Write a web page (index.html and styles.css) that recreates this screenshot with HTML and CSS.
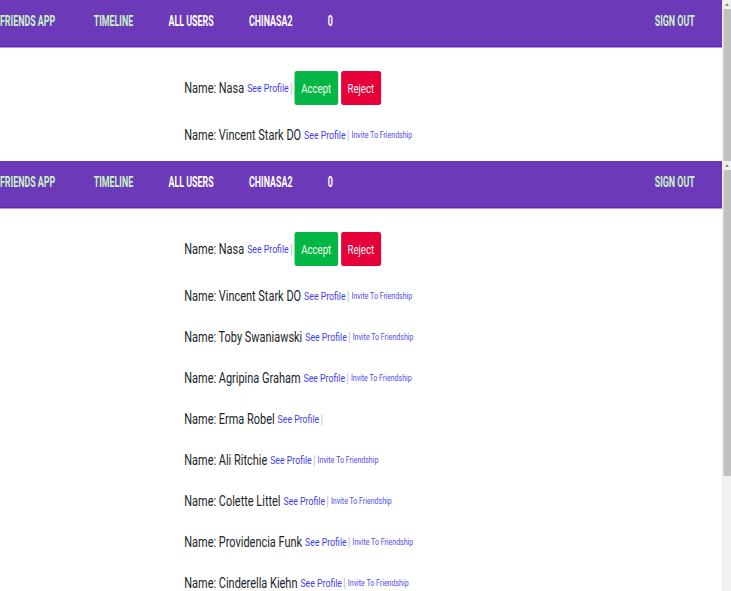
FILE: index.html
```html
<!DOCTYPE html>
<html>
<head>
<meta charset="utf-8">
<link rel="stylesheet" href="styles.css">
</head>
<body>
<div class="pane pane-top">
  <div class="pane-main">
    <nav class="nav">
      <div class="nav-inner">
        <a class="brand green">FRIENDS APP</a>
        <ul class="nav-list">
          <li><a class="green">TIMELINE</a></li>
          <li><a>ALL USERS</a></li>
          <li><a>CHINASA2</a></li>
          <li><a>0</a></li>
        </ul>
        <a class="signout green">SIGN OUT</a>
      </div>
    </nav>
    <div class="users">
      <div class="row"><span class="name">Name: Nasa</span><a class="see">See Profile</a><span class="sep">|</span><button class="btn accept">Accept</button><button class="btn reject">Reject</button></div>
      <div class="row"><span class="name">Name: Vincent Stark DO</span><a class="see">See Profile</a><span class="sep">|</span><a class="invite">Invite To Friendship</a></div>
    </div>
  </div>
  <div class="scrollbar">
    <div class="sb-arrow"></div>
    <div class="sb-thumb sb-thumb-full"></div>
  </div>
</div>
<div class="pane pane-bottom">
  <div class="pane-main">
    <nav class="nav">
      <div class="nav-inner">
        <a class="brand green">FRIENDS APP</a>
        <ul class="nav-list">
          <li><a class="green">TIMELINE</a></li>
          <li><a>ALL USERS</a></li>
          <li><a>CHINASA2</a></li>
          <li><a>0</a></li>
        </ul>
        <a class="signout green">SIGN OUT</a>
      </div>
    </nav>
    <div class="users">
      <div class="row"><span class="name">Name: Nasa</span><a class="see">See Profile</a><span class="sep">|</span><button class="btn accept">Accept</button><button class="btn reject">Reject</button></div>
      <div class="row"><span class="name">Name: Vincent Stark DO</span><a class="see">See Profile</a><span class="sep">|</span><a class="invite">Invite To Friendship</a></div>
      <div class="row"><span class="name">Name: Toby Swaniawski</span><a class="see">See Profile</a><span class="sep">|</span><a class="invite">Invite To Friendship</a></div>
      <div class="row"><span class="name">Name: Agripina Graham</span><a class="see">See Profile</a><span class="sep">|</span><a class="invite">Invite To Friendship</a></div>
      <div class="row"><span class="name">Name: Erma Robel</span><a class="see">See Profile</a><span class="sep">|</span></div>
      <div class="row"><span class="name">Name: Ali Ritchie</span><a class="see">See Profile</a><span class="sep">|</span><a class="invite">Invite To Friendship</a></div>
      <div class="row"><span class="name">Name: Colette Littel</span><a class="see">See Profile</a><span class="sep">|</span><a class="invite">Invite To Friendship</a></div>
      <div class="row"><span class="name">Name: Providencia Funk</span><a class="see">See Profile</a><span class="sep">|</span><a class="invite">Invite To Friendship</a></div>
      <div class="row"><span class="name">Name: Cinderella Kiehn</span><a class="see">See Profile</a><span class="sep">|</span><a class="invite">Invite To Friendship</a></div>
    </div>
  </div>
  <div class="scrollbar">
    <div class="sb-arrow"></div>
    <div class="sb-thumb sb-thumb-part"></div>
    <div class="sb-track"></div>
  </div>
</div>
</body>
</html>
```
FILE: styles.css
```css
html, body {
  margin: 0;
  padding: 0;
  background: #ffffff;
  overflow: hidden;
  height: 591px;
  font-family: Roboto, "Noto Sans", sans-serif;
}

.pane {
  display: flex;
  overflow: hidden;
}

.pane-top {
  height: 161px;
}

.pane-bottom {
  height: 430px;
}

.pane-main {
  flex: 1;
  overflow: hidden;
  min-width: 0;
}

/* NAV */
.nav {
  height: 46px;
  background: #6c3ab8;
  border-bottom: 1px solid #5b28a8;
  box-shadow: 0 1px 0 #b49ae6;
  overflow: hidden;
}

.nav-inner {
  width: calc(100% / 0.592);
  height: 100%;
  transform: scaleX(0.592);
  transform-origin: 0 0;
  display: flex;
  align-items: center;
  padding-bottom: 5px;
  box-sizing: border-box;
  font-size: 15px;
  font-weight: 700;
  color: #ffffff;
}

.nav a {
  color: #ffffff;
  text-decoration: none;
  white-space: nowrap;
}

.nav a.green {
  color: #c9f3c6;
}

.brand {
  padding-left: 0;
}

.nav-list {
  list-style: none;
  display: flex;
  margin: 0 0 0 35px;
  padding: 0;
}

.nav-list li a {
  display: block;
  padding: 0 29.8px;
}

.signout {
  margin-left: auto;
  padding-right: 46px;
}

/* USERS LIST */
.users {
  width: calc(100% / 0.74);
  transform: scaleX(0.74);
  transform-origin: 0 0;
  padding: 24px 0 0 249px;
  box-sizing: border-box;
}

.row {
  display: flex;
  align-items: center;
  min-height: 23px;
  margin-bottom: 18px;
  white-space: nowrap;
  color: #222428;
}

.name {
  font-size: 14.8px;
  color: #222428;
}

.see {
  font-size: 11.8px;
  color: #4040f0;
  margin-left: 4px;
}

.sep {
  font-size: 12px;
  color: #aea6ea;
  margin-left: 2px;
}

.invite {
  font-size: 9.5px;
  color: #4b4bef;
  margin-left: 3px;
}

.btn {
  height: 34px;
  padding: 0 9px;
  border: none;
  border-radius: 3px;
  color: #f4fff4;
  font-family: Roboto, "Noto Sans", sans-serif;
  font-size: 13px;
  cursor: pointer;
}

.accept {
  background: #04b644;
  margin-left: 3px;
}

.reject {
  background: #e6003a;
  color: #fff3f5;
  margin-left: 4px;
}

/* FAKE SCROLLBARS */
.scrollbar {
  width: 8px;
  display: flex;
  flex-direction: column;
  background: #f1f1f1;
  border-left: 1px solid #ececec;
}

.sb-arrow {
  height: 9px;
  position: relative;
  background: #f1f1f1;
}

.sb-arrow::before {
  content: "";
  position: absolute;
  left: 2px;
  top: 3px;
  border-left: 2px solid transparent;
  border-right: 2px solid transparent;
  border-bottom: 3px solid #8a8a8a;
}

.sb-thumb {
  background: #c1c1c1;
  border-left: 1px solid #dadada;
}

.sb-thumb-full {
  flex: 1;
}

.sb-thumb-part {
  height: 306px;
}

.sb-track {
  flex: 1;
  background: #f1f1f1;
}
```
